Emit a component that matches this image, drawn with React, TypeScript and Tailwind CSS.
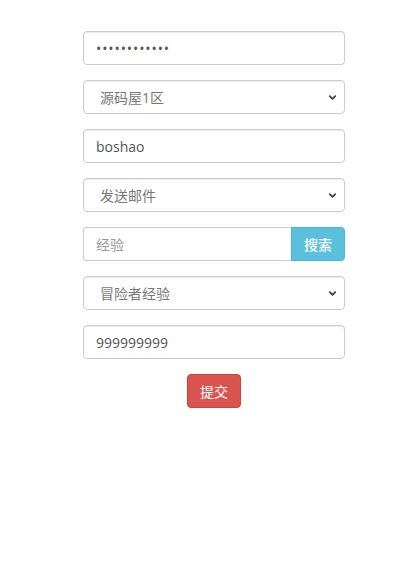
import { ChevronDown } from "lucide-react";

const FONT = "font-['Segoe_UI','Open_Sans','Noto_Sans_CJK_SC',sans-serif]";

function Field({ value, placeholder, type = "text" }: { value?: string; placeholder?: string; type?: string }) {
  return (
    <input
      type={type}
      defaultValue={value}
      placeholder={placeholder}
      className={`h-[34px] w-full rounded-[4px] border border-[#ccc] bg-white px-3 text-[14px] text-[#555] outline-none placeholder:text-[#999] shadow-[inset_0_1px_1px_rgba(0,0,0,0.075)] ${
        type === "password" ? "tracking-[0.9px]" : ""
      }`}
    />
  );
}

function Select({ value }: { value: string }) {
  return (
    <div className="relative">
      <select
        defaultValue={value}
        className="h-[34px] w-full appearance-none rounded-[4px] border border-[#ccc] bg-white pl-4 pr-8 text-[14px] text-[#777] outline-none shadow-[inset_0_1px_1px_rgba(0,0,0,0.075)]"
      >
        <option>{value}</option>
      </select>
      <ChevronDown
        size={11}
        strokeWidth={4}
        className="pointer-events-none absolute right-[7px] top-[12px] text-[#444]"
      />
    </div>
  );
}

export default function App() {
  return (
    <div className={`min-h-[578px] bg-white pt-[31px] ${FONT}`}>
      <form className="ml-[83px] flex w-[262px] flex-col gap-[15px]">
        <Field type="password" value="123456789012" />
        <Select value="源码屋1区" />
        <Field value="boshao" />
        <Select value="发送邮件" />
        <div className="flex">
          <input
            placeholder="经验"
            className="h-[34px] min-w-0 flex-1 rounded-l-[4px] border border-r-0 border-[#ccc] bg-white px-3 text-[14px] text-[#555] outline-none placeholder:text-[#999]"
          />
          <button
            type="button"
            className="h-[34px] w-[54px] rounded-r-[4px] border border-[#46b8da] bg-[#5bc0de] text-[14px] font-medium text-white"
          >
            搜索
          </button>
        </div>
        <Select value="冒险者经验" />
        <Field value="999999999" />
        <div className="flex justify-center">
          <button
            type="button"
            className="h-[34px] w-[54px] rounded-[4px] border border-[#d43f3a] bg-[#d9534f] text-[14px] text-white"
          >
            提交
          </button>
        </div>
      </form>
    </div>
  );
}
